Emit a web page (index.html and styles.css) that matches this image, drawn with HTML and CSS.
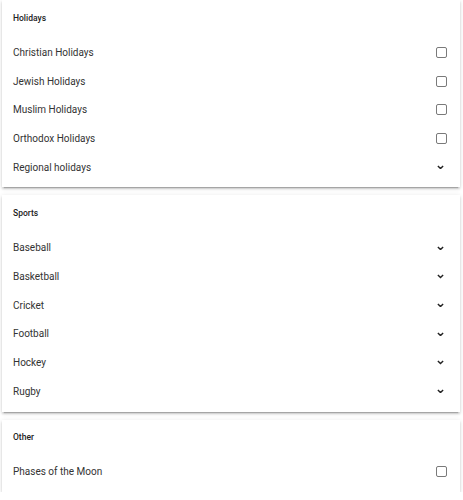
FILE: index.html
```html
<!DOCTYPE html>
<html>

<head>
    <link rel="stylesheet" href="styles.css">
</head>

<body>

    <div class="card">
        <div class="card-title">Holidays</div>
        <div class="row"><span>Christian Holidays</span><span class="checkbox"></span></div>
        <div class="row"><span>Jewish Holidays</span><span class="checkbox"></span></div>
        <div class="row"><span>Muslim Holidays</span><span class="checkbox"></span></div>
        <div class="row"><span>Orthodox Holidays</span><span class="checkbox"></span></div>
        <div class="row"><span>Regional holidays</span>
            <svg class="chevron" viewBox="0 0 8 5"><path d="M1 1 L4 4 L7 1" /></svg>
        </div>
    </div>

    <div class="card">
        <div class="card-title">Sports</div>
        <div class="row"><span>Baseball</span>
            <svg class="chevron" viewBox="0 0 8 5"><path d="M1 1 L4 4 L7 1" /></svg>
        </div>
        <div class="row"><span>Basketball</span>
            <svg class="chevron" viewBox="0 0 8 5"><path d="M1 1 L4 4 L7 1" /></svg>
        </div>
        <div class="row"><span>Cricket</span>
            <svg class="chevron" viewBox="0 0 8 5"><path d="M1 1 L4 4 L7 1" /></svg>
        </div>
        <div class="row"><span>Football</span>
            <svg class="chevron" viewBox="0 0 8 5"><path d="M1 1 L4 4 L7 1" /></svg>
        </div>
        <div class="row"><span>Hockey</span>
            <svg class="chevron" viewBox="0 0 8 5"><path d="M1 1 L4 4 L7 1" /></svg>
        </div>
        <div class="row"><span>Rugby</span>
            <svg class="chevron" viewBox="0 0 8 5"><path d="M1 1 L4 4 L7 1" /></svg>
        </div>
    </div>

    <div class="card">
        <div class="card-title">Other</div>
        <div class="row"><span>Phases of the Moon</span><span class="checkbox"></span></div>
    </div>

</body>

</html>
```

FILE: styles.css
```css
body {
    font-family: Roboto, Arial, sans-serif;
    background-color: #fff;
    margin: 0;
    padding: 0 3px 0 2px;
    display: flex;
    flex-direction: column;
    gap: 8px;
    color: #333;
}

.card {
    background: white;
    padding: 0 0 6px 0;
    box-shadow: 0 2px 2px rgba(0, 0, 0, 0.14), 0 3px 1px -2px rgba(0, 0, 0, 0.2), 0 1px 5px rgba(0, 0, 0, 0.12);
}

.card-title {
    font-size: 8.5px;
    font-weight: 500;
    line-height: 14px;
    height: 27.5px;
    padding: 10.5px 0 0 11px;
    color: #222;
}

.row {
    display: flex;
    align-items: center;
    justify-content: space-between;
    height: 28.7px;
    padding: 0 13px 0 11px;
    font-size: 10px;
}

.checkbox {
    width: 9px;
    height: 9px;
    border: 1.5px solid #7a7a7a;
    border-radius: 2px;
}

.chevron {
    width: 7px;
    height: 4.5px;
    margin-right: 3px;
    fill: none;
    stroke: #222;
    stroke-width: 1.6;
}
```
